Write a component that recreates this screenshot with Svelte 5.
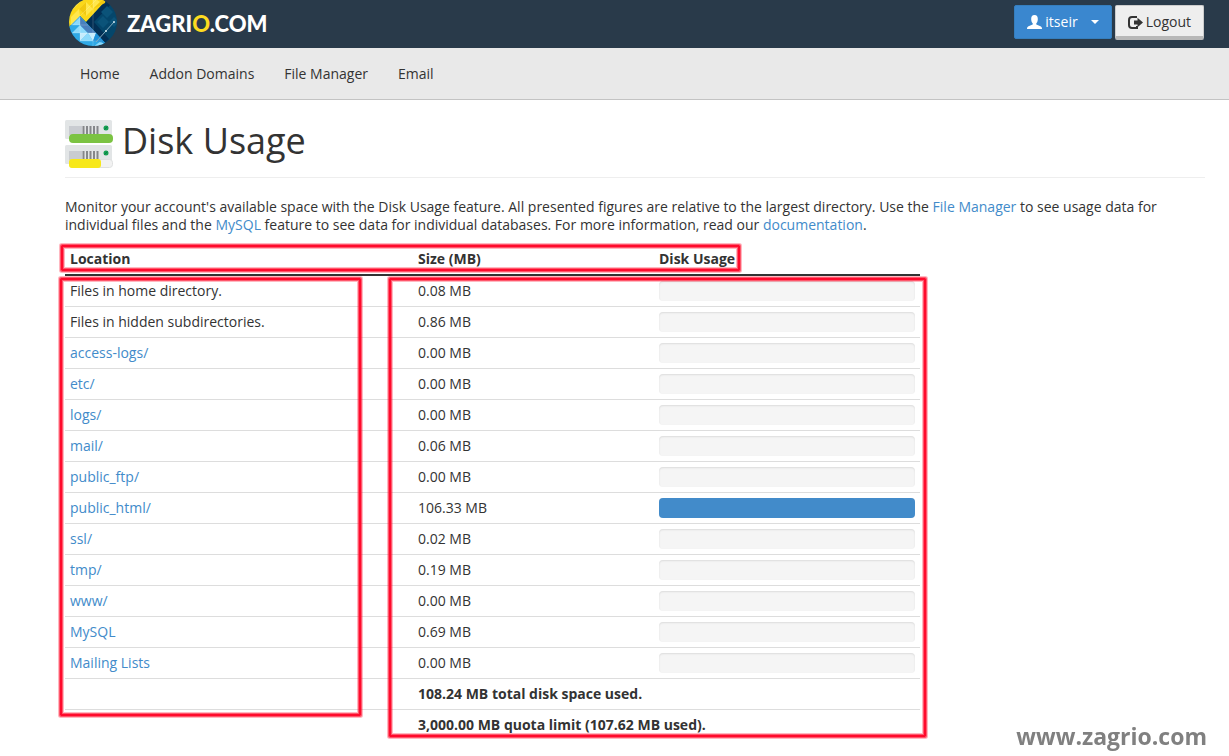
<script>
	const nav = ['Home', 'Addon Domains', 'File Manager', 'Email'];

	const rows = [
		{ name: 'Files in home directory.', size: '0.08', used: 0 },
		{ name: 'Files in hidden subdirectories.', size: '0.86', used: 0 },
		{ name: 'access-logs/', size: '0.00', used: 0, link: true },
		{ name: 'etc/', size: '0.00', used: 0, link: true },
		{ name: 'logs/', size: '0.00', used: 0, link: true },
		{ name: 'mail/', size: '0.06', used: 0, link: true },
		{ name: 'public_ftp/', size: '0.00', used: 0, link: true },
		{ name: 'public_html/', size: '106.33', used: 100, link: true },
		{ name: 'ssl/', size: '0.02', used: 0, link: true },
		{ name: 'tmp/', size: '0.19', used: 0, link: true },
		{ name: 'www/', size: '0.00', used: 0, link: true },
		{ name: 'MySQL', size: '0.69', used: 0, link: true },
		{ name: 'Mailing Lists', size: '0.00', used: 0, link: true }
	];
</script>

<header>
	<a class="brand" href="#home" aria-label="zagrio.com">
		<svg width="50" height="48" viewBox="0 0 50 48" aria-hidden="true">
			<defs>
				<clipPath id="globe"><circle cx="25" cy="22" r="24" /></clipPath>
			</defs>
			<g clip-path="url(#globe)">
				<rect y="-2" width="50" height="50" fill="#04466b" />
				<path d="M38 0L18 22L37 43L41 39L26 22L45 2Z" fill="#022f55" />
				<path d="M33 12L39 6L45 12L39 18ZM29 22L35 16L41 22L35 28ZM41 22L46 17L51 22L46 27Z" fill="#0b5379" />
				<path d="M0 28V-3H41L18 22L12 16Z" fill="#fbd81a" />
				<path d="M3 17L11 9L12 16L3 25ZM11 9L18 2L25 9L18 16ZM25 9L25 -3L32 2Z" fill="#ffe74c" />
				<path d="M11 9L18 2L18 16ZM25 9L31 3L38 -2L37 3Z" fill="#f2c90f" />
				<path d="M12 16L42 48H0V28Z" fill="#2fa9e6" />
				<path d="M4 25L12 17L12 25ZM4 33L12 25L20 33ZM12 41L20 33L25 41ZM25 47L33 41L39 47Z" fill="#8cdafb" />
				<path d="M12 17L28 33H20L12 25Z" fill="#4a80bd" />
				<path d="M20 33H28L25 41ZM12 33L20 33L12 41Z" fill="#c5ecfd" />
				<path d="M28 33L37 43L25 41Z" fill="#1d8fd8" />
				<path d="M25 -2V47M4 25H20M4 33H28M12 41H34M12 17V41M4 10L18 -4M3 25L33 -5" stroke="#fff" stroke-opacity="0.18" fill="none" />
				<path d="M28 42L46 22" stroke="#84aabd" fill="none" />
			</g>
			<circle cx="38" cy="31" r="1" fill="#d0e7ef" />
			<circle cx="46" cy="22" r="1" fill="#d0e7ef" />
		</svg>
		<span class="wordmark">ZAGRI<b>O</b>.COM</span>
	</a>
	<div class="account">
		<button class="user" aria-haspopup="menu">
			<svg width="15" height="14" viewBox="0 0 15 14" aria-hidden="true">
				<path d="M7.500 0C5 0 4 2 4.200 4.500C4.300 6.500 5 7.600 5.700 8.300V9.500L1.500 11.300C.5 11.800 0 12.300 0 14H15C15 12.300 14.500 11.800 13.500 11.300L9.300 9.500V8.300C10 7.600 10.700 6.500 10.800 4.500C11 2 10 0 7.500 0Z" fill="#fff" />
			</svg>
			<span>itseir</span>
			<i class="caret"></i>
		</button>
		<button class="logout">
			<svg width="15" height="13" viewBox="0 0 15 13" aria-hidden="true">
				<path d="M9 1H4Q1 1 1 4V9Q1 12 4 12H9V10" fill="none" stroke="#333" stroke-width="2" />
				<path d="M6 4.500H9.500V1.800L15 6.500L9.500 11.200V8.500H6Z" fill="#333" />
			</svg>
			<span>Logout</span>
		</button>
	</div>
</header>

<nav>
	{#each nav as item}
		<a href="#{item}">{item}</a>
	{/each}
</nav>

<main>
	<h1>
		<svg width="48" height="48" viewBox="0 0 48 48" aria-hidden="true">
			{#each [0, 25] as y}
				<g transform="translate(0 {y})">
					<rect width="47" height="19" rx="1.500" fill="#e2e5e6" />
					<rect x="4" y="6" width="13" height="9" fill="#c9ccd1" />
					<path d="M18.500 6V14M22 6V14M25.500 6V14M29 6V14M32.500 6V14" stroke="#85878a" stroke-width="2" />
					<circle cx="41" cy="8" r="2.500" fill="#14a050" />
					<path d="M39.500 9.500L42.500 6.500" stroke="#087a49" stroke-width="1" />
				</g>
			{/each}
			<rect x="4" y="14" width="44" height="9" rx="4" fill="#7bc342" />
			<rect x="4.500" y="39.500" width="43" height="8" rx="3" fill="#f2f2f2" stroke="#dfe0e0" />
			<rect x="4" y="39" width="32" height="9" rx="3" fill="#f7e81a" />
		</svg>
		<span>Disk Usage</span>
	</h1>

	<p>
		Monitor your account's available space with the Disk Usage feature. All presented figures are relative to the largest directory. Use the
		<a href="#files">File Manager</a> to see usage data for individual files and the <a href="#mysql">MySQL</a> feature to see data for
		individual databases. For more information, read our <a href="#docs">documentation</a>.
	</p>

	<div class="usage">
		<table>
			<thead>
				<tr>
					<th class="location">Location</th>
					<th class="size">Size (MB)</th>
					<th>Disk Usage</th>
				</tr>
			</thead>
			<tbody>
				{#each rows as row}
					<tr>
						<td>
							{#if row.link}<a href="#{row.name}">{row.name}</a>{:else}{row.name}{/if}
						</td>
						<td>{row.size} MB</td>
						<td>
							<div class="progress"><div class="bar" style="width: {row.used}%"></div></div>
						</td>
					</tr>
				{/each}
				<tr class="total">
					<td></td>
					<td colspan="2">108.24 MB total disk space used.</td>
				</tr>
				<tr class="total">
					<td></td>
					<td colspan="2">3,000.00 MB quota limit (107.62 MB used).</td>
				</tr>
			</tbody>
		</table>
		<!-- red highlight frames over the table -->
		<div class="mark head"></div>
		<div class="mark names"></div>
		<div class="mark sizes"></div>
	</div>
</main>

<div class="watermark">www.zagrio.com</div>

<style>
	:global(body) {
		background: #fff;
		color: #333;
		font-family: 'Open Sans', sans-serif;
		font-size: 14px;
		line-height: 20px;
	}

	a {
		color: #428bca;
		text-decoration: none;
	}

	header {
		display: flex;
		justify-content: space-between;
		height: 48px;
		padding: 0 25px 0 68px;
		background: #293a4a;
	}

	.brand {
		display: flex;
		gap: 9px;
		color: #fff;
	}

	.wordmark {
		font-family: Lato, sans-serif;
		font-size: 22px;
		font-weight: 900;
		line-height: 47px;
	}

	.wordmark b {
		color: #fddb20;
		font-weight: 900;
	}

	.account {
		display: flex;
		align-items: flex-start;
		gap: 3px;
		padding-top: 5px;
	}

	button {
		display: flex;
		align-items: center;
		box-sizing: border-box;
		height: 34px;
		padding: 0 12px;
		border: 1px solid #357ebd;
		border-radius: 2px;
		font: inherit;
	}

	.user {
		gap: 3px;
		background: #3a87cf;
		color: #fff;
	}

	.caret {
		margin-left: 10px;
		border: 4px solid transparent;
		border-top-color: #fff;
		border-bottom: 0;
	}

	.logout {
		gap: 3px;
		height: 35px;
		padding-top: 2px;
		border: 1px solid #ccc;
		border-bottom: 4px solid #b8b8b8;
		background: #eee;
		color: #333;
	}

	nav {
		display: flex;
		gap: 30px;
		padding: 16px 80px 15px;
		border-bottom: 1px solid #c3c3c3;
		background: #e9e9e9;
	}

	nav a {
		color: #333;
	}

	main {
		padding: 20px 24px 0 65px;
	}

	h1 {
		display: flex;
		gap: 9px;
		margin: 0;
		padding-bottom: 9px;
		border-bottom: 1px solid #eee;
		font-size: 36px;
		font-weight: 400;
		line-height: 42px;
	}

	p {
		margin: 20px 0 10px;
		line-height: 18px;
	}

	.usage {
		position: relative;
		width: 75%;
	}

	table {
		width: 100%;
		border-collapse: separate;
		border-spacing: 0;
		table-layout: fixed;
	}

	th {
		padding: 5px;
		border-bottom: 2px solid #333;
		font-weight: 700;
		text-align: left;
	}

	td {
		height: 20px;
		padding: 5px;
		border-top: 1px solid #ddd;
	}

	tbody tr:first-child td {
		border-top: 0;
	}

	.location {
		width: 338px;
	}

	.size {
		width: 231px;
	}

	.total {
		font-weight: 700;
	}

	.progress {
		height: 20px;
		overflow: hidden;
		border-radius: 4px;
		background: #f5f5f5;
		box-shadow: inset 0 1px 2px rgba(0, 0, 0, 0.1);
	}

	.bar {
		height: 20px;
		background: #428bca;
	}

	.mark {
		position: absolute;
		box-sizing: border-box;
		border: 2px solid #ff0a2c;
		border-radius: 1px;
		box-shadow: 0 0 0 1px rgba(255, 20, 50, 0.6), 0 0 0 2px rgba(255, 20, 50, 0.3), inset 0 0 0 1px rgba(255, 20, 50, 0.6),
			inset 0 0 0 2px rgba(255, 20, 50, 0.3);
		pointer-events: none;
	}

	.head {
		top: 1px;
		left: -4px;
		width: 679px;
		height: 26px;
	}

	.names {
		top: 34px;
		left: -5px;
		width: 301px;
		bottom: 24px;
	}

	.sizes {
		top: 34px;
		left: 324px;
		right: -6px;
		bottom: 3px;
	}

	.watermark {
		position: fixed;
		right: 22px;
		bottom: 6px;
		color: #808080;
		font-size: 23px;
		font-weight: 700;
		line-height: 28px;
	}
</style>
